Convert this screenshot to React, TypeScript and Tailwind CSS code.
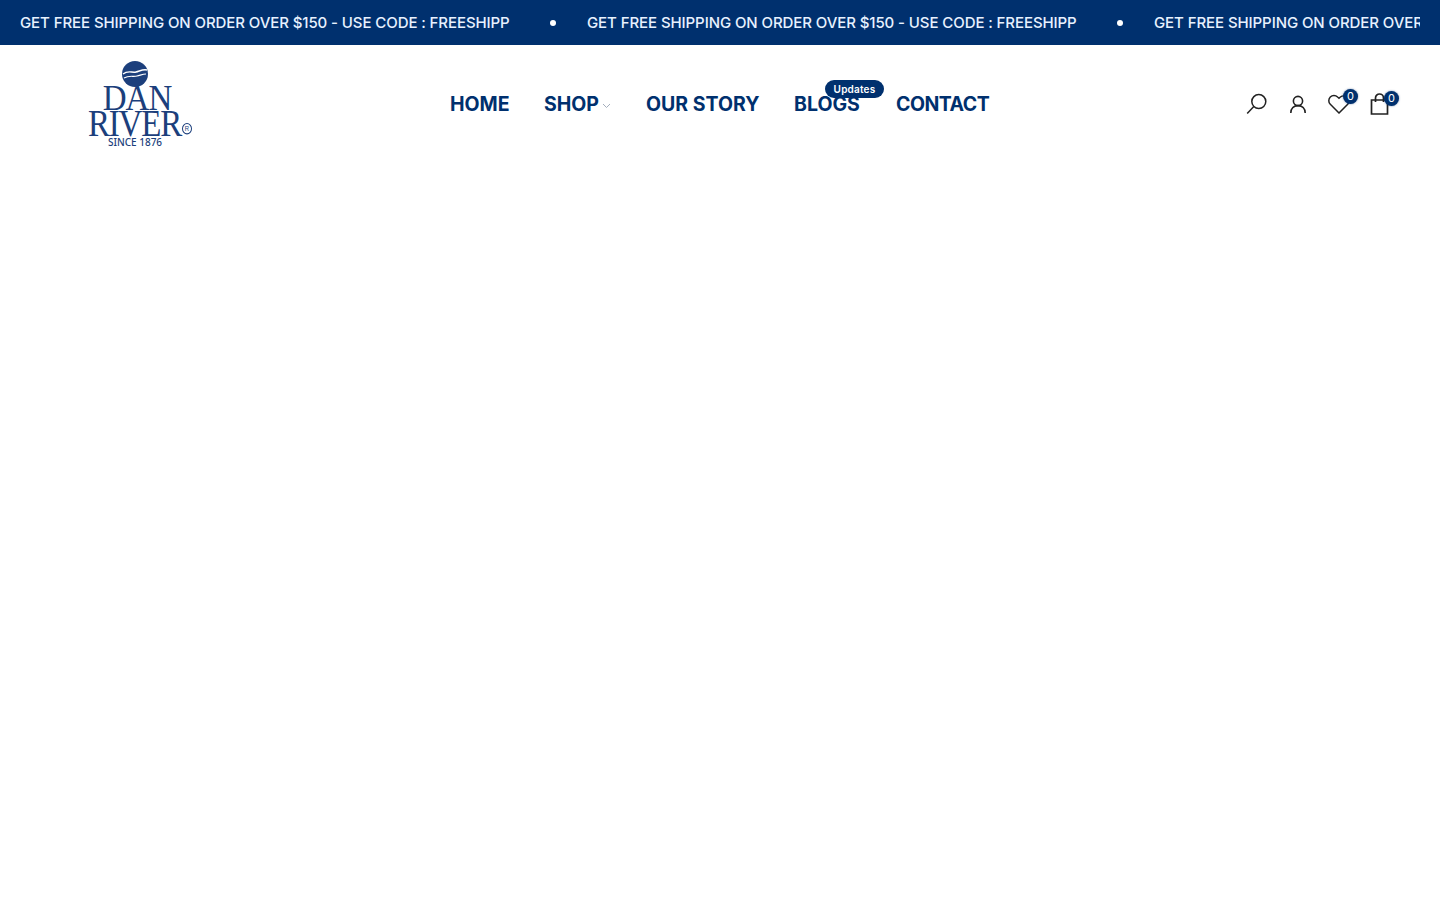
const navy = "text-[#00306e]";
const promo = "GET FREE SHIPPING ON ORDER OVER $150 - USE CODE : FREESHIPP";

function PromoItem() {
  return (
    <div className="flex shrink-0 items-center w-[567px]">
      <span className="w-[490px] shrink-0 whitespace-nowrap text-[15px] font-medium tracking-[-0.09px] text-[#e8f2ff]">{promo}</span>
      <span className="ml-[40px] h-[6px] w-[6px] rounded-full bg-white" />
    </div>
  );
}

function Logo() {
  return (
    <div className="flex w-[92px] flex-col items-center font-['Liberation_Serif',serif] text-[#1c3f7c]">
      <svg width="26" height="26" viewBox="0 0 26 26" className="mb-[-1px]">
        <circle cx="13" cy="13" r="13" fill="#1c3f7c" />
        <path d="M1 13c5-4 9-1 13-2s7-3 11-2" stroke="#fff" strokeWidth="1.4" fill="none" />
        <path d="M2 17c5-3 9-1 13-2s6-2 9-2" stroke="#fff" strokeWidth="1.2" fill="none" />
      </svg>
      <span className="origin-top scale-y-[1.1] pl-1 text-[33px] leading-[22px] tracking-[-1px]">DAN</span>
      <span className="relative origin-top scale-y-[1.15] whitespace-nowrap pr-[1px] text-[33px] leading-[26px] tracking-[-1.2px]">
        RIVER
        <span className="absolute left-full top-[13px] ml-[0px] flex h-[10px] w-[10px] items-center justify-center rounded-full border border-[#1c3f7c] font-['Liberation_Sans',sans-serif] text-[6px] leading-none tracking-normal">R</span>
      </span>
      <span className="mt-[2px] whitespace-nowrap font-['Noto_Sans',sans-serif] text-[10px] leading-[12px] font-medium">SINCE 1876</span>
    </div>
  );
}

function NavLink({ label, className, children }: { label: string; className?: string; children?: React.ReactNode }) {
  return (
    <a className={`relative flex items-center text-[19.5px] font-bold ${navy} ${className ?? ""}`}>
      {label}
      {children}
    </a>
  );
}

function CountBadge({ className }: { className: string }) {
  return (
    <span className={`absolute flex h-[15px] w-[15px] items-center justify-center rounded-full bg-[#00306e] text-[11px] leading-none text-white shadow-[0_0_2px_rgba(0,48,110,0.6)] ${className}`}>
      0
    </span>
  );
}

export default function App() {
  return (
    <div className="min-h-[900px] bg-white font-['Inter',sans-serif]">
      {/* Announcement bar */}
      <div className="h-[45px] bg-[#00306e] px-5 pt-[1px]">
        <div className="flex h-full items-center overflow-hidden">
          <PromoItem />
          <PromoItem />
          <PromoItem />
        </div>
      </div>

      {/* Header */}
      <header className="flex h-[118px] items-start pl-[89px] pr-[40px] pt-[16px]">
        <div className="w-[361px] shrink-0">
          <Logo />
        </div>
        <nav className="flex items-center pt-[29px]">
          <div className="w-[94px]"><NavLink label="HOME" /></div>
          <div className="w-[102px]">
            <NavLink label="SHOP">
              <svg width="9" height="6" viewBox="0 0 9 6" className="ml-[3px] mt-[2px]" fill="none" stroke="#9aa5b5" strokeWidth="0.9">
                <path d="M1 1l3.5 3.5L8 1" />
              </svg>
            </NavLink>
          </div>
          <div className="w-[148px]"><NavLink label="OUR STORY" /></div>
          <div className="w-[102px]">
            <NavLink label="BLOGS">
              <span className="absolute left-[31px] top-[-10px] flex h-[18px] w-[59px] items-center justify-center rounded-full bg-[#00306e] text-[10px] font-semibold tracking-[0.2px] text-white">Updates</span>
            </NavLink>
          </div>
          <NavLink label="CONTACT" className="tracking-[-0.5px]" />
        </nav>

        <div className="ml-auto flex items-center pr-[11px] pt-[32px] text-[#111]">
          <svg width="22" height="22" viewBox="0 0 22 22" fill="none" stroke="#222" strokeWidth="1.5" className="mr-[21px]">
            <circle cx="12.8" cy="8.6" r="7" />
            <path d="M7.8 13.6L1.2 20.5" />
          </svg>
          <svg width="18" height="19" viewBox="0 0 18 19" fill="none" stroke="#222" strokeWidth="1.6" className="mr-[21px]">
            <circle cx="9" cy="6" r="4.6" />
            <path d="M1.8 18c0-4.5 3-7.4 7.2-7.4s7.200 2.900 7.200 7.400" />
          </svg>
          <div className="relative mr-[20px] h-[20px] w-[22px]">
            <svg width="22" height="20" viewBox="0 0 22 20" fill="none" stroke="#222" strokeWidth="1.5">
              <path d="M11 19L2.300 10.300a5.200 5.200 0 0 1 0-7.300 5.200 5.200 0 0 1 7.300 0L11 4.300l1.400-1.300a5.200 5.200 0 0 1 7.300 7.300z" />
            </svg>
            <CountBadge className="left-[15px] top-[-5px]" />
          </div>
          <div className="relative h-[22px] w-[19px]">
            <svg width="19" height="22" viewBox="0 0 19 22" fill="none" stroke="#222" strokeWidth="1.7">
              <path d="M1.500 7h16v14h-16z" />
              <path d="M5.500 9V5a4 4 0 0 1 8 0v4" />
            </svg>
            <CountBadge className="left-[14px] top-[-2px]" />
          </div>
        </div>
      </header>
    </div>
  );
}
